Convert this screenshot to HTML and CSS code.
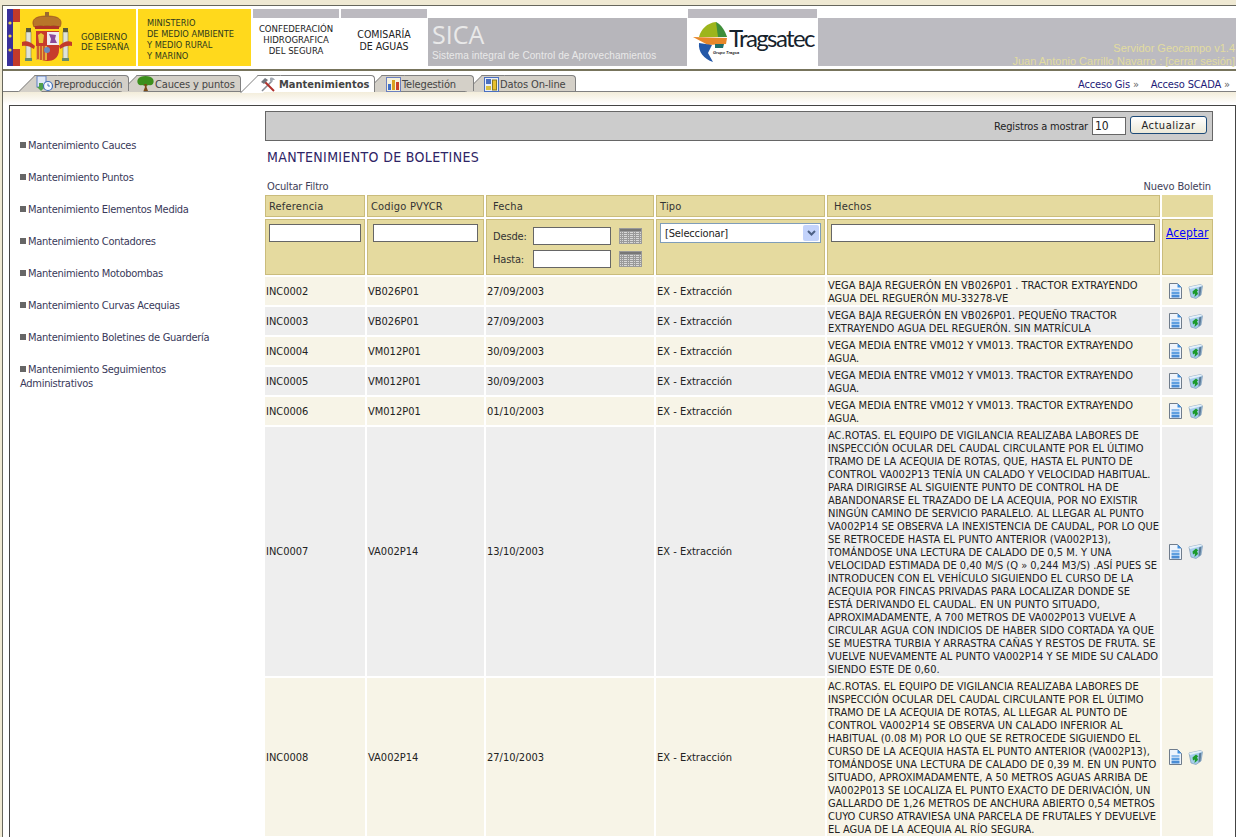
FILE: index.html
```html
<!DOCTYPE html>
<html lang="es">
<head>
  <meta charset="utf-8">
  <meta name="viewport" content="width=device-width, initial-scale=1">
  <title>SICA - Mantenimiento de Boletines</title>
  <link rel="stylesheet" href="styles.css">
</head>
<body>
  <svg class="defs" width="0" height="0">
    <symbol id="i-doc" viewBox="0 0 13 16">
      <path d="M.5.5h8l4 4v11H.5z" fill="#eef4fc" stroke="#6f7c8c"/>
      <path d="M8.500.5v4h4z" fill="#3f8fe0"/>
      <rect x="2.500" y="6" width="8" height="2.500" fill="#8fbcec"/>
      <rect x="2.500" y="9" width="8" height="2.500" fill="#5f9fe0"/>
      <rect x="2.500" y="12" width="8" height="2.500" fill="#4a8cd4"/>
    </symbol>
    <symbol id="i-bin" viewBox="0 0 15 15">
      <path d="M1 3 13 .5 14.500 2 13 11l-5 3.500L3 13z" fill="#a6cdec" stroke="#7f9cb8" stroke-width=".7"/>
      <path d="M1 3 13 .5 14 2 2 5z" fill="#e4f0fa"/>
      <path d="M11 3.500 13.500 2.500 12.500 11 10.500 12.500z" fill="#5f7d9a"/>
      <path d="M4.500 7.500l3.500-3 2.500 2-1.500.5 1 3L6.500 13 7 9.500 5 10.500z" fill="#1c9a2c"/>
    </symbol>
    <symbol id="i-cal" viewBox="0 0 23 16">
      <rect width="23" height="16" fill="#9a9a9a"/>
      <rect x="1" y="1" width="21" height="2" fill="#777"/>
      <path d="M1 4.500h21M1 6.500h21M1 8.500h21M1 10.500h21M1 12.500h21M1 14.500h21M3.500 4v11M6.500 4v11M9.500 4v11M12.500 4v11M15.500 4v11M18.500 4v11" stroke="#d8d8d8" stroke-dasharray="1 1"/>
    </symbol>
  </svg>

  <div class="frame">
    <header class="header">
      <div class="logo logo-gob">
        <svg class="arms" width="74" height="57" viewBox="0 0 74 57">
          <rect width="6" height="57" fill="#39309a"/>
          <circle cx="3" cy="14" r="1.600" fill="#e9d24a"/>
          <circle cx="3" cy="27" r="1.600" fill="#e9d24a"/>
          <circle cx="3" cy="41" r="1.600" fill="#e9d24a"/>
          <rect x="6" width="7" height="57" fill="#c23a2a"/>
          <rect x="6" y="13" width="7" height="27" fill="#ffe63a"/>
          <path d="M27 18c-4-9 4-11 13-11s17 2 13 11c-8-2-18-2-26 0z" fill="#b8762a" stroke="#8a3a20" stroke-width=".6"/>
          <path d="M38 3h4v5h-4z" fill="#9a6a30"/>
          <rect x="28" y="17" width="24" height="3" fill="#b03226"/>
          <path d="M29 22h23v19c0 8-6 11-11.500 11S29 49 29 41z" fill="#c73a2c"/>
          <rect x="40" y="23" width="12" height="13" fill="#f0eaf0"/>
          <path d="M42 25l7 1-1 4 2 4h-7l1-4z" fill="#8a4a9a"/>
          <rect x="29" y="37" width="11" height="14" fill="#e8b03a"/>
          <path d="M31 37v13M34 37v14M37 37v14" stroke="#c23a2a" stroke-width="1.400"/>
          <path d="M31 26l3-2 3 2-1 8h-4z" fill="#e8c83a"/>
          <circle cx="40" cy="41" r="3" fill="#6a8ac0"/>
          <rect x="19" y="23" width="5" height="27" fill="#dfe3d8" stroke="#7a7a60" stroke-width=".6"/>
          <rect x="56" y="23" width="5" height="27" fill="#dfe3d8" stroke="#7a7a60" stroke-width=".6"/>
          <path d="M19 19h5v4h-5zM56 19h5v4h-5z" fill="#5a5a3a"/>
          <path d="M18 49h7v3h-7zM55 49h7v3h-7z" fill="#6a8a6a"/>
          <path d="M15 33c4-2 9 0 13 4l-1 3c-4-3-9-4-12-3zM65 33c-4-2-9 0-13 4l1 3c4-3 9-4 12-3z" fill="#c23a2a"/>
        </svg>
        <span class="logo-gob-text">GOBIERNO<br>DE ESPAÑA</span>
      </div>
      <div class="logo logo-min">MINISTERIO<br>DE MEDIO AMBIENTE<br>Y MEDIO RURAL<br>Y MARINO</div>
      <div class="logo logo-org logo-chs">CONFEDERACIÓN<br>HIDROGRAFICA<br>DEL SEGURA</div>
      <div class="logo logo-org logo-agua">COMISARÍA<br>DE AGUAS</div>
      <div class="logo logo-sica">
        <span class="sica-name">SICA</span>
        <span class="sica-sub">Sistema integral de Control de Aprovechamientos</span>
      </div>
      <div class="logo logo-org logo-trag">
        <div class="trag-inner">
          <svg width="36" height="41" viewBox="0 0 36 41">
            <path d="M6 16C8 8 14 2 23 1l11 15z" fill="#9db51c"/>
            <path d="M23 1c6 3 9 9 11 15H25z" fill="#3f8f3a"/>
            <path d="M0 16l34 1-1 6-18 1z" fill="#e8872a"/>
            <path d="M6 22l13 2-4 8 5 9C11 38 5 31 6 22z" fill="#2458a8"/>
            <path d="M22 23h9l-1 4h-8z" fill="#1f6f6a"/>
          </svg>
          <span class="trag-name">Tragsatec</span>
          <span class="trag-sub">Grupo Tragsa</span>
        </div>
      </div>
      <div class="logo logo-user">
        <span>Servidor Geocampo v1.4</span>
        <span>Juan Antonio Carrillo Navarro : [cerrar sesión]</span>
      </div>
    </header>

    <nav class="nav">
      <ul class="tabs">
        <li class="tab tab-1">
          <svg width="17" height="16" viewBox="0 0 17 16"><rect x="1" y="0" width="9" height="11" fill="#dfe8f6" stroke="#5f7fc0"/><path d="M3 7h4v4h2l-4 4-4-4h2z" fill="#4fa04a"/><circle cx="12" cy="10" r="4.500" fill="#f4f8ff" stroke="#3f6fb8" stroke-width="1.200"/><path d="M12 7.500V10h2" fill="none" stroke="#3f6fb8"/></svg>
          Preproducción
        </li>
        <li class="tab tab-2">
          <svg width="17" height="16" viewBox="0 0 17 16"><path d="M1 3c2-4 13-4 15 0 2 4-1 7-4 6-2 1-5 1-7 0C2 10-1 7 1 3z" fill="#3c8f1c"/><path d="M7 8h3l-.5 3 1.500 4H6.500L8 11z" fill="#7a4a16"/></svg>
          Cauces y puntos
        </li>
        <li class="tab tab-3 active">
          <svg width="16" height="16" viewBox="0 0 16 16"><path d="M2 14 12 4" stroke="#8a8f98" stroke-width="1.600"/><path d="M14 14 5 5" stroke="#b0302a" stroke-width="2"/><path d="M1 5l4-4 3 2-4 4z" fill="#70757c"/><path d="M10 1c2-1 4 0 5 2l-2 0-1 2-2-1z" fill="#a4aab2"/></svg>
          Mantenimientos
        </li>
        <li class="tab tab-4">
          <svg width="15" height="15" viewBox="0 0 15 15"><rect x=".5" y=".5" width="14" height="14" fill="#f6f2dc" stroke="#6a7fc0"/><rect x="2" y="7" width="3" height="6" fill="#3f6fc8"/><rect x="6" y="3" width="3" height="10" fill="#d8a020"/><rect x="10" y="5" width="3" height="8" fill="#c8402a"/></svg>
          Telegestión
        </li>
        <li class="tab tab-5">
          <svg width="15" height="15" viewBox="0 0 15 15"><rect x=".5" y=".5" width="14" height="14" fill="#e8eef8" stroke="#4a6fc0"/><rect x="2" y="2" width="5" height="5" fill="#4a6fc0"/><rect x="2" y="9" width="5" height="4" fill="#d8c040"/><rect x="8.500" y="3" width="4" height="10" fill="#e8c030" stroke="#8a7a20"/></svg>
          Datos On-line
        </li>
      </ul>
      <div class="nav-links">
        <a>Acceso Gis <b>»</b></a>
        <a>Acceso SCADA <b>»</b></a>
      </div>
    </nav>

    <div class="stage">
      <div class="box">
        <aside class="side">
          <a class="side-item">Mantenimiento Cauces</a>
          <a class="side-item">Mantenimiento Puntos</a>
          <a class="side-item">Mantenimiento Elementos Medida</a>
          <a class="side-item">Mantenimiento Contadores</a>
          <a class="side-item">Mantenimiento Motobombas</a>
          <a class="side-item">Mantenimiento Curvas Acequias</a>
          <a class="side-item">Mantenimiento Boletines de Guardería</a>
          <a class="side-item">Mantenimiento Seguimientos Administrativos</a>
        </aside>

        <main class="main">
          <form class="toolbar">
            <label>Registros a mostrar</label>
            <input class="field field-count" type="text" value="10">
            <button class="btn" type="button">Actualizar</button>
          </form>

          <h1 class="title">MANTENIMIENTO DE BOLETINES</h1>

          <div class="links">
            <a>Ocultar Filtro</a>
            <a>Nuevo Boletin</a>
          </div>

          <table class="grid">
            <colgroup>
              <col class="c-ref"><col class="c-cod"><col class="c-fec"><col class="c-tip"><col class="c-hec"><col class="c-acc">
            </colgroup>
            <thead>
              <tr class="head">
                <th>Referencia</th>
                <th>Codigo PVYCR</th>
                <th class="wide">Fecha</th>
                <th>Tipo</th>
                <th class="wide">Hechos</th>
                <th class="blank"></th>
              </tr>
              <tr class="filter">
                <td><input class="field" type="text"></td>
                <td><input class="field" type="text"></td>
                <td>
                  <div class="dates">
                    <label>Desde:</label><input class="field" type="text"><svg width="23" height="16"><use href="#i-cal"/></svg>
                    <label>Hasta:</label><input class="field" type="text"><svg width="23" height="16"><use href="#i-cal"/></svg>
                  </div>
                </td>
                <td>
                  <div class="select">
                    <span>[Seleccionar]</span>
                    <span class="select-btn"><svg width="9" height="7" viewBox="0 0 9 7"><path d="M1 1l3.500 3.500L8 1" fill="none" stroke="#4d6185" stroke-width="2"/></svg></span>
                  </div>
                </td>
                <td><input class="field" type="text"></td>
                <td class="accept"><a>Aceptar</a></td>
              </tr>
            </thead>
            <tbody>
              <tr>
                <td>INC0002</td><td>VB026P01</td><td>27/09/2003</td><td>EX - Extracción</td>
                <td>VEGA BAJA REGUERÓN EN VB026P01 . TRACTOR EXTRAYENDO<br>AGUA DEL REGUERÓN MU-33278-VE</td>
                <td class="acts"><svg class="a-doc"><use href="#i-doc"/></svg><svg class="a-bin"><use href="#i-bin"/></svg></td>
              </tr>
              <tr>
                <td>INC0003</td><td>VB026P01</td><td>27/09/2003</td><td>EX - Extracción</td>
                <td>VEGA BAJA REGUERÓN EN VB026P01. PEQUEÑO TRACTOR<br>EXTRAYENDO AGUA DEL REGUERÓN. SIN MATRÍCULA</td>
                <td class="acts"><svg class="a-doc"><use href="#i-doc"/></svg><svg class="a-bin"><use href="#i-bin"/></svg></td>
              </tr>
              <tr>
                <td>INC0004</td><td>VM012P01</td><td>30/09/2003</td><td>EX - Extracción</td>
                <td>VEGA MEDIA ENTRE VM012 Y VM013. TRACTOR EXTRAYENDO<br>AGUA.</td>
                <td class="acts"><svg class="a-doc"><use href="#i-doc"/></svg><svg class="a-bin"><use href="#i-bin"/></svg></td>
              </tr>
              <tr>
                <td>INC0005</td><td>VM012P01</td><td>30/09/2003</td><td>EX - Extracción</td>
                <td>VEGA MEDIA ENTRE VM012 Y VM013. TRACTOR EXTRAYENDO<br>AGUA.</td>
                <td class="acts"><svg class="a-doc"><use href="#i-doc"/></svg><svg class="a-bin"><use href="#i-bin"/></svg></td>
              </tr>
              <tr>
                <td>INC0006</td><td>VM012P01</td><td>01/10/2003</td><td>EX - Extracción</td>
                <td>VEGA MEDIA ENTRE VM012 Y VM013. TRACTOR EXTRAYENDO<br>AGUA.</td>
                <td class="acts"><svg class="a-doc"><use href="#i-doc"/></svg><svg class="a-bin"><use href="#i-bin"/></svg></td>
              </tr>
              <tr>
                <td>INC0007</td><td>VA002P14</td><td>13/10/2003</td><td>EX - Extracción</td>
                <td>AC.ROTAS. EL EQUIPO DE VIGILANCIA REALIZABA LABORES DE<br>INSPECCIÓN OCULAR DEL CAUDAL CIRCULANTE POR EL ÚLTIMO<br>TRAMO DE LA ACEQUIA DE ROTAS, QUE, HASTA EL PUNTO DE<br>CONTROL VA002P13 TENÍA UN CALADO Y VELOCIDAD HABITUAL.<br>PARA DIRIGIRSE AL SIGUIENTE PUNTO DE CONTROL HA DE<br>ABANDONARSE EL TRAZADO DE LA ACEQUIA, POR NO EXISTIR<br>NINGÚN CAMINO DE SERVICIO PARALELO. AL LLEGAR AL PUNTO<br>VA002P14 SE OBSERVA LA INEXISTENCIA DE CAUDAL, POR LO QUE<br>SE RETROCEDE HASTA EL PUNTO ANTERIOR (VA002P13),<br>TOMÁNDOSE UNA LECTURA DE CALADO DE 0,5 M. Y UNA<br>VELOCIDAD ESTIMADA DE 0,40 M/S (Q » 0,244 M3/S) .ASÍ PUES SE<br>INTRODUCEN CON EL VEHÍCULO SIGUIENDO EL CURSO DE LA<br>ACEQUIA POR FINCAS PRIVADAS PARA LOCALIZAR DONDE SE<br>ESTÁ DERIVANDO EL CAUDAL. EN UN PUNTO SITUADO,<br>APROXIMADAMENTE, A 700 METROS DE VA002P013 VUELVE A<br>CIRCULAR AGUA CON INDICIOS DE HABER SIDO CORTADA YA QUE<br>SE MUESTRA TURBIA Y ARRASTRA CAÑAS Y RESTOS DE FRUTA. SE<br>VUELVE NUEVAMENTE AL PUNTO VA002P14 Y SE MIDE SU CALADO<br>SIENDO ESTE DE 0,60.</td>
                <td class="acts"><svg class="a-doc"><use href="#i-doc"/></svg><svg class="a-bin"><use href="#i-bin"/></svg></td>
              </tr>
              <tr>
                <td>INC0008</td><td>VA002P14</td><td>27/10/2003</td><td>EX - Extracción</td>
                <td>AC.ROTAS. EL EQUIPO DE VIGILANCIA REALIZABA LABORES DE<br>INSPECCIÓN OCULAR DEL CAUDAL CIRCULANTE POR EL ÚLTIMO<br>TRAMO DE LA ACEQUIA DE ROTAS, AL LLEGAR AL PUNTO DE<br>CONTROL VA002P14 SE OBSERVA UN CALADO INFERIOR AL<br>HABITUAL (0.08 M) POR LO QUE SE RETROCEDE SIGUIENDO EL<br>CURSO DE LA ACEQUIA HASTA EL PUNTO ANTERIOR (VA002P13),<br>TOMÁNDOSE UNA LECTURA DE CALADO DE 0,39 M. EN UN PUNTO<br>SITUADO, APROXIMADAMENTE, A 50 METROS AGUAS ARRIBA DE<br>VA002P013 SE LOCALIZA EL PUNTO EXACTO DE DERIVACIÓN, UN<br>GALLARDO DE 1,26 METROS DE ANCHURA ABIERTO 0,54 METROS<br>CUYO CURSO ATRAVIESA UNA PARCELA DE FRUTALES Y DEVUELVE<br>EL AGUA DE LA ACEQUIA AL RÍO SEGURA.</td>
                <td class="acts"><svg class="a-doc"><use href="#i-doc"/></svg><svg class="a-bin"><use href="#i-bin"/></svg></td>
              </tr>
            </tbody>
          </table>
        </main>
      </div>
    </div>
  </div>
</body>
</html>
```

FILE: styles.css
```css
* { box-sizing: border-box; }

html, body {
  height: 100%;
  overflow: hidden;
}

body {
  margin: 0;
  padding: 5px 0 0 2px;
  background: #efe9d3;
  font-family: "DejaVu Sans Condensed", "DejaVu Sans", sans-serif;
  font-size: 11px;
  letter-spacing: -0.15px;
  color: #222;
}

.defs { position: absolute; }

.frame {
  height: 900px;
  background: #fff;
  border-top: 1px solid #66665c;
  border-left: 1px solid #66665c;
}

/* cabecera */
.header {
  display: flex;
  height: 65px;
  padding-top: 3px;
  border-bottom: 2px solid #77745c;
  letter-spacing: 0;
}

.logo { height: 57px; flex: none; }

.logo-gob {
  display: flex;
  width: 129px;
  margin-left: 4px;
  background: #ffd91c;
}

.arms { flex: none; }

.logo-gob-text {
  margin: 23px 0 0 0;
  font-size: 9.500px;
  line-height: 10px;
  color: #2e3a1c;
}

.logo-min {
  width: 113px;
  margin-left: 2px;
  padding: 8px 0 0 9px;
  background: #ffd91c;
  font-size: 9.200px;
  line-height: 11px;
  color: #2e3a1c;
}

.logo-org {
  margin-left: 2px;
  background: linear-gradient(#bcbac0 9px, #fff 9px);
  text-align: center;
  color: #222;
}

.logo-chs {
  width: 86px;
  padding-top: 14px;
  font-size: 9.500px;
  line-height: 11px;
}

.logo-agua {
  width: 86px;
  padding-top: 19px;
  font-size: 10.500px;
  line-height: 12px;
}

.logo-sica {
  display: flex;
  flex-direction: column;
  width: 259px;
  margin: 0 1px;
  padding: 9px 0 0 4px;
  background: linear-gradient(#fff 9px, #b7b6bb 9px);
  color: #e9e9e9;
  font-family: "Liberation Sans", sans-serif;
}

.sica-name {
  font-family: "Open Sans", sans-serif;
  font-size: 25px;
  line-height: 30px;
  margin-top: 1px;
}

.sica-sub {
  margin-top: 1px;
  font-size: 10px;
  letter-spacing: 0.1px;
}

.logo-trag {
  width: 129px;
  margin-left: 0;
  padding-top: 9px;
}

.trag-inner {
  display: flex;
  position: relative;
  padding: 3px 0 0 5px;
}

.trag-inner svg { flex: none; }

.trag-name {
  margin: 7px 0 0 0;
  font-family: Lato, sans-serif;
  font-size: 24px;
  line-height: 20px;
  letter-spacing: -1.600px;
  color: #16222c;
}

.trag-sub {
  position: absolute;
  left: 25px;
  top: 32px;
  font-family: "Liberation Sans", sans-serif;
  font-size: 4px;
  line-height: 5px;
  font-style: italic;
  font-weight: bold;
  color: #222;
}

.logo-user {
  display: flex;
  flex: 1;
  flex-direction: column;
  align-items: flex-end;
  margin-left: 1px;
  padding: 33px 1px 0 0;
  background: linear-gradient(#fff 9px, #bcbbc1 9px);
  font-family: "Liberation Sans", sans-serif;
  font-size: 11px;
  line-height: 13px;
  color: #e2dca0;
}

/* pestañas */
.nav {
  display: flex;
  justify-content: space-between;
  height: 21px;
  padding-top: 4px;
  border-bottom: 1px solid #808080;
}

.tabs {
  display: flex;
  margin: 0;
  padding: 0;
  list-style: none;
}

.tab {
  display: flex;
  align-items: center;
  gap: 1px;
  position: relative;
  height: 16px;
  padding-top: 1px;
  background: #d4d0c8;
  border: 1px solid #808080;
  border-left: 0;
  border-bottom: 0;
  border-radius: 0 4px 0 0;
  color: #444;
}

.tab::before {
  content: '';
  position: absolute;
  z-index: -1;
  top: -1px;
  left: 0;
  width: 22px;
  height: 16px;
  background: inherit;
  border-top: 1px solid #808080;
  border-left: 1px solid #808080;
  transform: skewX(-45deg);
  transform-origin: top left;
}

.tab svg { flex: none; }

.tab-1 { z-index: 5; width: 94px; margin-left: 32px; padding-left: 1px; }
.tab-2 { z-index: 4; width: 104px; margin-left: 8px; padding-left: 0; }
.tab-3 { z-index: 6; width: 117px; margin-left: 17px; padding-left: 2px; gap: 3px; }
.tab-4 { z-index: 2; width: 92px; margin-left: 7px; padding-left: 4px; }
.tab-5 { z-index: 1; width: 94px; margin-left: 8px; padding-left: 2px; }

.tab.active {
  height: 17px;
  background: #fff;
  font-weight: bold;
  letter-spacing: 0;
  color: #444;
}

.tab.active::before { height: 17px; }

.nav-links {
  display: flex;
  gap: 12px;
  padding: 3px 6px 0 0;
  color: #221a78;
}

.nav-links b { font-weight: normal; color: #666; }

/* contenido */
.stage {
  padding: 13px 0 0 6px;
  background: linear-gradient(#f3edda, #fff 12px);
}

.box {
  display: flex;
  width: 1227px;
  background: #fff;
  border: 1px solid #444;
}

.side {
  flex: none;
  display: flex;
  flex-direction: column;
  gap: 18px;
  width: 255px;
  padding: 33px 45px 0 10px;
  letter-spacing: -0.28px;
}

.side-item {
  line-height: 14px;
  color: #39395a;
}

.side-item::before {
  content: '';
  display: inline-block;
  width: 6px;
  height: 6px;
  margin: 0 2px 1px 0;
  background: #666;
}

.main {
  flex: none;
  width: 948px;
  padding-top: 5px;
}

.toolbar {
  display: flex;
  align-items: center;
  gap: 4px;
  height: 30px;
  padding: 0 5px 0 0;
  justify-content: flex-end;
  background: #ccc;
  border: 1px solid #666;
}

.btn {
  width: 77px;
  height: 18px;
  margin: -2px 0 0 0;
  padding: 0;
  background: linear-gradient(#fff, #ece9d8);
  border: 1px solid #1c4a78;
  border-radius: 3px;
  font: inherit;
  letter-spacing: 0.5px;
  color: #222;
}

.field {
  display: block;
  height: 18px;
  margin: 0;
  padding: 0 2px;
  background: #fff;
  border: 1px solid #666;
  font: inherit;
  font-size: 12px;
  color: #222;
}

.field-count { width: 34px; }

.title {
  margin: 9px 0 0 2px;
  font-size: 14px;
  font-weight: normal;
  line-height: 15px;
  letter-spacing: 0.35px;
  color: #2e2465;
}

.links {
  display: flex;
  justify-content: space-between;
  margin-top: 15px;
  padding: 0 2px;
  line-height: 13px;
  color: #3e3e58;
}

.grid {
  width: 952px;
  margin: 0 -2px;
  table-layout: fixed;
  border-collapse: separate;
  border-spacing: 2px;
}

.c-ref { width: 100px; }
.c-cod { width: 117px; }
.c-fec { width: 168px; }
.c-tip { width: 169px; }
.c-hec { width: 333px; }
.c-acc { width: 51px; }

.head th {
  height: 22px;
  padding: 0 3px;
  background: #e5da9f;
  border: 1px solid #cabc7c;
  font-weight: normal;
  text-align: left;
  letter-spacing: 0.2px;
  color: #333;
}

.head th.wide { padding-left: 6px; }
.head th.blank { border-color: #e5da9f; }

.filter td {
  height: 56px;
  padding: 4px 3px 0;
  vertical-align: top;
  background: #e5da9f;
  border: 1px solid #cabc7c;
  color: #333;
}

.filter .field { width: 100%; }

.filter td:nth-child(2) { padding: 4px 5px 0; }
.filter td:nth-child(5) { padding: 4px 4px 0 3px; }

.dates {
  display: grid;
  grid-template-columns: 40px 78px 31px;
  row-gap: 5px;
  align-items: center;
  padding: 3px 0 0 3px;
}

.dates svg { margin-left: 8px; width: 23px; }

.select {
  display: flex;
  justify-content: space-between;
  align-items: center;
  height: 20px;
  padding: 0 1px 0 4px;
  margin-top: -1px;
  background: #fff;
  border: 1px solid #7f9db9;
  color: #222;
}

.select-btn {
  display: flex;
  justify-content: center;
  align-items: center;
  width: 16px;
  height: 16px;
  background: #c3d3fb;
  border-radius: 2px;
}

.accept { padding-top: 6px !important; }

.accept a {
  font-size: 12px;
  letter-spacing: 0.1px;
  color: #00f;
  text-decoration: underline;
}

tbody td {
  height: 28px;
  padding: 1px;
  background: #f7f4e7;
  line-height: 13px;
  letter-spacing: 0;
  white-space: nowrap;
}

tbody td:nth-child(5) { padding: 2px 1px 0; }

tbody tr:nth-child(even) td { background: #eee; }

.acts { padding-left: 7px !important; }

.acts svg { vertical-align: middle; }
.a-doc { width: 13px; height: 16px; margin-right: 6px; }
.a-bin { width: 15px; height: 15px; }
```
